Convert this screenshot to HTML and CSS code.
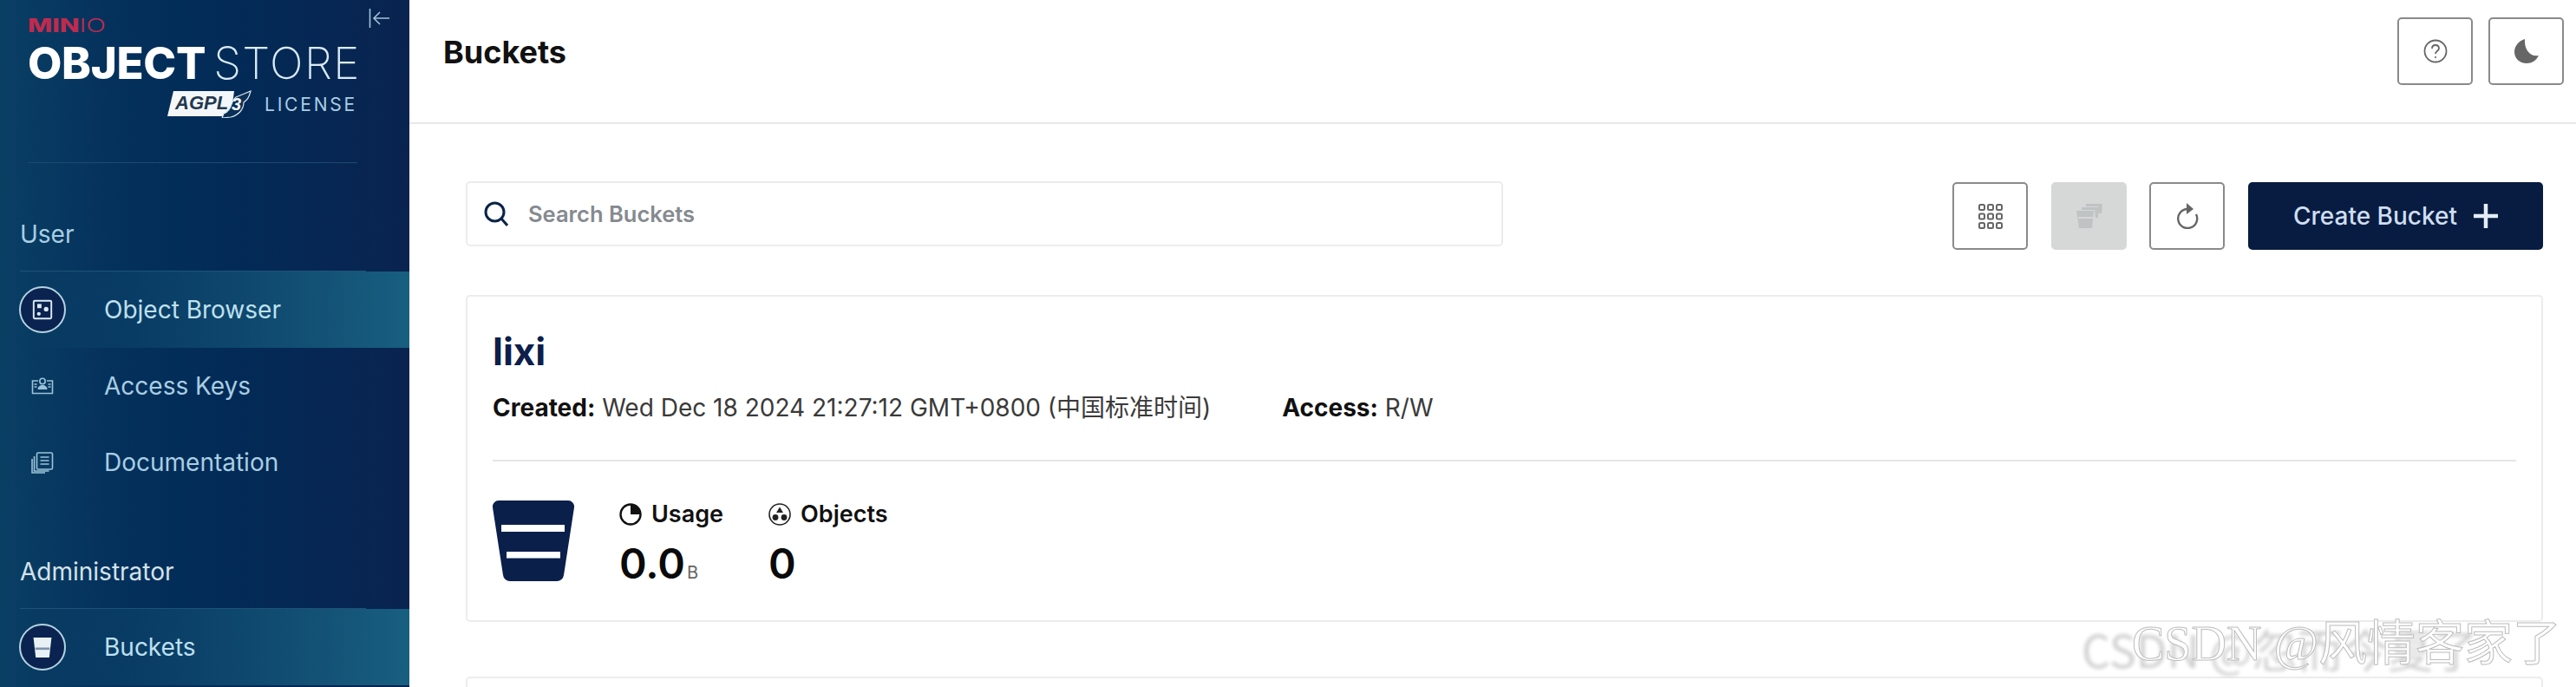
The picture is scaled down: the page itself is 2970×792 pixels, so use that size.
FILE: index.html
```html
<!DOCTYPE html>
<html lang="en">
<head>
  <meta charset="UTF-8" />
  <title>MinIO Console</title>
  <link rel="stylesheet" href="styles.css">
</head>
<body>
  <div class="app">
    <aside class="sidebar">
      <div class="brand">
        <svg class="collapse" viewBox="0 0 25 22" fill="none" stroke="#9fc3d8" stroke-width="1.6">
          <path d="M1.5 0v22M24 11H6M13 4l-7 7 7 7"/>
        </svg>
        <div class="brand-minio"><b>MIN</b>IO</div>
        <div class="brand-name"><b>OBJECT</b> <span>STORE</span></div>
        <div class="brand-license">
          <svg class="agpl" viewBox="0 0 98 32">
            <path d="M8 1h70l-4 29H1z" fill="#f4f7f9"/>
            <path d="M66 27C76 23 74 12 80 8l17-7c-2 8-4 10-8 13 0 8-6 15-15 17l-10 1z" fill="#0b2f55" stroke="#dce8f0" stroke-width="1.2"/>
            <text x="10" y="22" class="agpl-text">AGPL</text>
            <text x="75" y="23" class="agpl-three">3</text>
          </svg>
          <span>LICENSE</span>
        </div>
      </div>

      <div class="nav-label">User</div>
      <a class="nav-item active">
        <span class="nav-icon">
          <svg viewBox="0 0 20 20" width="24" height="24" fill="none" stroke="#dcebf3" stroke-width="1.6">
            <rect x="1.5" y="1.5" width="17" height="17" rx="1"/>
            <rect x="5" y="4.5" width="4" height="4" fill="#dcebf3" stroke="none"/>
            <circle cx="13.5" cy="9.5" r="2.2" fill="#dcebf3" stroke="none"/>
            <circle cx="6.5" cy="14" r="1.8" fill="#dcebf3" stroke="none"/>
          </svg>
        </span>
        Object Browser
      </a>
      <a class="nav-item">
        <span class="nav-icon plain">
          <svg viewBox="0 0 26 20" width="26" height="20" fill="none" stroke="#9cc2d8" stroke-width="1.6">
            <path d="M8 4H1.5v14.5h23V4H18"/>
            <circle cx="13" cy="4.5" r="3.2"/>
            <path d="M7.5 14c0-3 2.5-5 5.5-5s5.5 2 5.5 5z" fill="#9cc2d8" stroke="none"/>
            <path d="M3.5 8h3M3.5 11h3M19.500 8h3M19.500 11h3"/>
          </svg>
        </span>
        Access Keys
      </a>
      <a class="nav-item">
        <span class="nav-icon plain">
          <svg viewBox="0 0 26 25" width="26" height="25" fill="none" stroke="#9cc2d8" stroke-width="1.6">
            <rect x="6.500" y="1" width="18" height="19" rx="1.500"/>
            <path d="M10.500 6h10M10.500 10h10M10.500 14h10"/>
            <path d="M3.500 5v17h17M1 8v16h15"/>
          </svg>
        </span>
        Documentation
      </a>

      <div class="nav-label second">Administrator</div>
      <a class="nav-item active">
        <span class="nav-icon">
          <svg viewBox="0 0 22 24" width="24" height="25">
            <path d="M1 1h20l-2.500 22h-15z" fill="#e8f1f6"/>
            <rect x="3" y="12" width="16" height="2.500" fill="#7f93a8"/>
          </svg>
        </span>
        Buckets
      </a>
    </aside>

    <main class="main">
      <header class="topbar">
        <h1>Buckets</h1>
        <div class="topbar-actions">
          <button class="icon-btn">
            <svg viewBox="0 0 28 28" width="28" height="28" fill="none" stroke="#666" stroke-width="1.800">
              <circle cx="14" cy="14" r="12.500"/>
              <path d="M10 11c0-2.500 1.800-4 4-4s4 1.500 4 3.800c0 3-4 3-4 6.200"/>
              <circle cx="14" cy="21" r="1.100" fill="#666" stroke="none"/>
            </svg>
          </button>
          <button class="icon-btn">
            <svg viewBox="0 0 28 28" width="28" height="28">
              <path d="M12 0C5 2 0 8 0 15c0 7 6 13 14 13 6 0 11-3 14-9-9 2-17-6-16-19z" fill="#666"/>
            </svg>
          </button>
        </div>
      </header>

      <div class="content">
        <div class="toolbar">
          <div class="search">
            <svg viewBox="0 0 28 29" width="28" height="29" fill="none" stroke="#0b2448" stroke-width="3">
              <circle cx="12.500" cy="12.500" r="10.500"/>
              <path d="M20 20l7 8"/>
            </svg>
            <span>Search Buckets</span>
          </div>
          <div class="toolbar-actions">
            <button class="icon-btn grid-btn">
              <svg viewBox="0 0 28 29" width="28" height="29" fill="none" stroke="#666" stroke-width="2">
                <rect x="1" y="1" width="6" height="6" rx="1.500"/><rect x="11" y="1" width="6" height="6" rx="1.500"/><rect x="21" y="1" width="6" height="6" rx="1.500"/>
                <rect x="1" y="11.500" width="6" height="6" rx="1.500"/><rect x="11" y="11.500" width="6" height="6" rx="1.500"/><rect x="21" y="11.500" width="6" height="6" rx="1.500"/>
                <rect x="1" y="22" width="6" height="6" rx="1.500"/><rect x="11" y="22" width="6" height="6" rx="1.500"/><rect x="21" y="22" width="6" height="6" rx="1.500"/>
              </svg>
            </button>
            <button class="icon-btn disabled">
              <svg viewBox="0 0 30 28" width="30" height="28" fill="#bfc3c3">
                <path d="M0 8h20l-2 20H3z"/>
                <path d="M6 4h20l-1 12h-3l-1-9H6zM11 0h19l-1 11h-3l-1-8H11z"/>
                <rect x="2" y="15" width="17" height="2" fill="#d6d8d8"/>
              </svg>
            </button>
            <button class="icon-btn">
              <svg viewBox="0 0 26 30" width="26" height="30" fill="none" stroke="#666" stroke-width="2.400">
                <path d="M13 7A11 11 0 1 0 23 13"/>
                <path d="M12 0l8 7-8 6z" fill="#666" stroke="none"/>
              </svg>
            </button>
            <button class="create-btn">
              Create Bucket
              <svg viewBox="0 0 28 28" width="28" height="28" fill="none" stroke="#e4edf5" stroke-width="4.500">
                <path d="M14 0v28M0 14h28"/>
              </svg>
            </button>
          </div>
        </div>

        <section class="card">
          <h2>lixi</h2>
          <div class="meta">
            <span class="created"><b>Created:</b> Wed Dec 18 2024 21:27:12 GMT+0800 (中国标准时间)</span>
            <span><b>Access:</b> R/W</span>
          </div>
          <div class="stats">
            <svg class="bucket" viewBox="0 0 94 93">
              <path d="M7 0h80a7 7 0 0 1 7 8l-12 78a8 8 0 0 1-8 7H20a8 8 0 0 1-8-7L0 8a7 7 0 0 1 7-8z" fill="#0b1f4b"/>
              <rect x="10" y="28" width="73" height="8" fill="#fff"/>
              <rect x="16" y="59" width="62" height="7.500" fill="#fff"/>
            </svg>
            <div class="stat">
              <div class="stat-title">
                <svg viewBox="0 0 26 26" width="26" height="26" fill="none" stroke="#111" stroke-width="2.400">
                  <circle cx="13" cy="13" r="11.500"/>
                  <path d="M13 13V1.500A11.500 11.500 0 0 1 24.500 13z" fill="#111" stroke="none"/>
                </svg>
                Usage
              </div>
              <div class="stat-value">0.0<small>B</small></div>
            </div>
            <div class="stat">
              <div class="stat-title">
                <svg viewBox="0 0 26 26" width="26" height="26" fill="none" stroke="#222" stroke-width="1.600">
                  <circle cx="13" cy="13" r="12"/>
                  <path d="M13 4.500l4 6.500H9z" fill="#222" stroke="none"/>
                  <circle cx="8" cy="16.500" r="3.400" fill="#222" stroke="none"/>
                  <circle cx="18" cy="16.500" r="3.400" fill="#222" stroke="none"/>
                </svg>
                Objects
              </div>
              <div class="stat-value">0</div>
            </div>
          </div>
        </section>

        <section class="card next"></section>
      </div>
    </main>
  </div>

  <div class="watermark blurred">CSDN @忽而今夏了</div>
  <div class="watermark">CSDN @风情客家了</div>
</body>
</html>
```

FILE: styles.css
```css
* { box-sizing: border-box; }
html, body {
  margin: 0;
  padding: 0;
  height: 792px;
  overflow: hidden;
  background: #fff;
  font-family: Inter, "Noto Sans CJK SC", sans-serif;
}
.app {
  display: flex;
  height: 792px;
  overflow: hidden;
}
button { font-family: inherit; cursor: pointer; }

/* sidebar */
.sidebar {
  position: relative;
  flex: 0 0 472px;
  width: 472px;
  min-width: 0;
  height: 792px;
  background: linear-gradient(90deg, #0a3f64 0%, #04305c 30%, #032a56 60%, #0a2350 100%);
  color: #a9cee2;
}
.brand {
  position: relative;
  height: 188px;
  margin: 0 60px 0 32px;
  padding-top: 17px;
  border-bottom: 1px solid #1c4a70;
}
.collapse {
  position: absolute;
  top: 10px;
  left: 393px;
  width: 25px;
  height: 22px;
}
.brand-minio {
  font-size: 21px;
  line-height: 26px;
  font-weight: 300;
  color: #c02a4e;
  transform-origin: left;
  transform: scaleX(1.42);
}
.brand-minio b { font-weight: 800; }
.brand-name {
  margin-top: 4px;
  font-size: 51px;
  line-height: 52px;
  white-space: nowrap;
  color: #fff;
  letter-spacing: -0.3px;
  word-spacing: -5px;
}
.brand-name b { font-weight: 800; }
.brand-name span { font-weight: 200; color: #d9ebf5; letter-spacing: 1.4px; }
.brand-license {
  display: flex;
  justify-content: flex-end;
  align-items: center;
  gap: 15px;
  margin-top: 5px;
  font-size: 21px;
  letter-spacing: 2.800px;
  color: #a9cfe6;
}
.agpl { width: 98px; height: 32px; }
.agpl-text {
  font-family: "Liberation Sans", sans-serif;
  font-size: 22px;
  font-style: italic;
  font-weight: 700;
  fill: #22384f;
  letter-spacing: 0;
}
.agpl-three {
  font-family: "Liberation Sans", sans-serif;
  font-size: 20px;
  font-style: italic;
  font-weight: 700;
  fill: #f4f7f9;
  letter-spacing: 0;
}
.nav-label {
  height: 125px;
  margin-left: 23px;
  margin-right: 50px;
  padding-top: 65px;
  font-size: 28px;
  line-height: 34px;
  color: #a9cee2;
  border-bottom: 1px solid #1c5474;
}
.nav-label.second {
  color: #d5e3ea;
}
.nav-item {
  display: flex;
  align-items: center;
  height: 88px;
  padding-left: 22px;
  font-size: 28px;
  font-weight: 400;
  color: #a9cee2;
}
.nav-item.active {
  color: #bfe0ef;
  background: linear-gradient(90deg, rgba(23, 95, 128, 0) 8%, #175f80 100%);
}
.nav-icon {
  display: flex;
  align-items: center;
  justify-content: center;
  flex: 0 0 54px;
  height: 54px;
  margin-right: 44px;
  border-radius: 50%;
  border: 2px solid #b5d3e2;
  background: #0b2350;
}
.nav-icon.plain {
  border-color: transparent;
  background: none;
}

/* top bar */
.main {
  flex: 1;
  min-width: 0;
}
.topbar {
  display: flex;
  align-items: flex-start;
  justify-content: space-between;
  height: 143px;
  padding: 20px 14px 0 39px;
  border-bottom: 2px solid #e8e8e8;
}
.topbar h1 {
  margin: 18px 0 0;
  font-size: 36px;
  line-height: 44px;
  font-weight: 700;
  color: #111;
}
.topbar-actions {
  display: flex;
  gap: 18px;
}
.icon-btn {
  display: flex;
  align-items: center;
  justify-content: center;
  width: 87px;
  height: 78px;
  padding: 0;
  background: #fff;
  border: 2px solid #8a8a8a;
  border-radius: 5px;
}
.icon-btn.disabled {
  background: #d6d8d8;
  border-color: #d6d8d8;
}
.grid-btn { margin-right: 1px; }

/* content */
.content {
  padding: 66px 38px 0 65px;
}
.toolbar {
  display: flex;
  justify-content: space-between;
  align-items: flex-start;
}
.search {
  display: flex;
  align-items: center;
  gap: 23px;
  width: 1196px;
  height: 75px;
  padding-left: 19px;
  border: 2px solid #ececec;
  border-radius: 5px;
  font-size: 25.5px;
  font-weight: 600;
  color: #858a8f;
}
.toolbar-actions {
  display: flex;
  gap: 26px;
  margin-top: 1px;
}
.create-btn {
  display: flex;
  align-items: center;
  justify-content: center;
  gap: 19px;
  width: 340px;
  height: 78px;
  margin-left: 1px;
  border: none;
  border-radius: 5px;
  background: #081c42;
  color: #cfdef0;
  font-size: 28px;
  font-weight: 500;
}
.card {
  height: 377px;
  margin-top: 52px;
  padding: 35px 29px 0;
  border: 2px solid #ececec;
  border-radius: 5px;
}
.card.next {
  margin-top: 63px;
}
.card h2 {
  margin: 0;
  font-size: 44px;
  line-height: 56px;
  font-weight: 700;
  color: #0d1f4a;
}
.meta {
  display: flex;
  margin-top: 19px;
  padding-bottom: 42px;
  border-bottom: 2px solid #e6e6e6;
  font-size: 28px;
  line-height: 36px;
  color: #3a3a3a;
}
.meta b { font-weight: 700; color: #111; }
.created { margin-right: 82px; }
.stats {
  display: flex;
  align-items: flex-start;
  margin-top: 45px;
}
.bucket {
  flex: 0 0 94px;
  width: 94px;
  height: 93px;
  margin-right: 52px;
}
.stat { margin-right: 52px; }
.stat-title {
  display: flex;
  align-items: center;
  gap: 11px;
  font-size: 27px;
  line-height: 32px;
  font-weight: 600;
  color: #111;
}
.stat-value {
  margin-top: 16px;
  font-size: 48px;
  line-height: 50px;
  font-weight: 600;
  color: #0a0a0a;
}
.stat-value small {
  margin-left: 2px;
  font-size: 20px;
  font-weight: 400;
  color: #666;
}

/* ghosted watermark over the corner */
.watermark {
  position: absolute;
  top: 710px;
  left: 2458px;
  font-family: "Liberation Serif", "Noto Sans CJK SC", serif;
  font-size: 56px;
  line-height: 64px;
  white-space: nowrap;
  color: #fff;
  -webkit-text-stroke: 1px #bdbdbd;
}
.watermark.blurred {
  left: 2400px;
  top: 716px;
  font-family: "Noto Sans CJK SC", sans-serif;
  font-size: 52px;
  -webkit-text-stroke: 0;
  color: transparent;
  text-shadow: 0 0 4px #cfcfcf;
}
```
